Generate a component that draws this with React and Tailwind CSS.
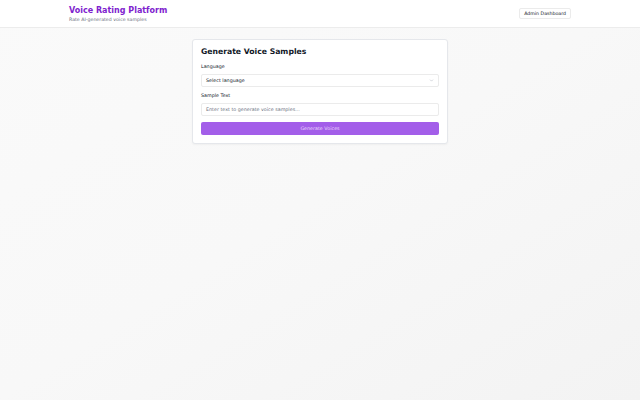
import { ChevronDown } from 'lucide-react';

export default function App() {
  return (
    <div
      className="min-h-[400px] w-full bg-gradient-to-br from-[#fafafa] via-[#f8f8f8] to-[#f3f3f3]"
      style={{ fontFamily: '"DejaVu Sans", sans-serif' }}
    >
      {/* header */}
      <header className="h-[28px] bg-white border-b border-[#ececec]">
        <div className="mx-[69px] h-full flex items-center justify-between">
          <div className="flex flex-col">
            <h1 className="text-[8px] leading-[11px] font-bold text-[#7e22ce]">Voice Rating Platform</h1>
            <p className="text-[4.7px] leading-[7px] text-[#6b7280]">Rate AI-generated voice samples</p>
          </div>
          <button className="h-[11px] px-[4px] rounded-[2px] border border-[#ebebeb] bg-white text-[4.7px] text-[#111827]">
            Admin Dashboard
          </button>
        </div>
      </header>

      {/* form card */}
      <div className="flex justify-center pt-[11px]">
        <div className="w-[256px] bg-white border border-[#e5e7eb] rounded-[3px] shadow-[0_1px_2px_rgba(0,0,0,0.04)] px-[8px] pt-[6px] pb-[8px]">
          <h2 className="text-[7.7px] leading-[12px] font-bold text-[#111827]">Generate Voice Samples</h2>

          <div className="mt-[5px]">
            <label className="block text-[4.8px] leading-[8px] text-[#111827]">Language</label>
            <div className="mt-[3px] h-[13px] flex items-center justify-between px-[4px] border border-[#ebebeb] rounded-[2px] bg-white">
              <span className="text-[4.8px] text-[#111827]">Select language</span>
              <ChevronDown className="w-[5px] h-[5px] text-[#9ca3af]" strokeWidth={2} />
            </div>
          </div>

          <div className="mt-[5px]">
            <label className="block text-[4.8px] leading-[8px] text-[#111827]">Sample Text</label>
            <div className="mt-[3px] h-[13px] flex items-center px-[4px] border border-[#ebebeb] rounded-[2px] bg-white">
              <span className="text-[4.8px] text-[#6b7280]">Enter text to generate voice samples...</span>
            </div>
          </div>

          <button className="block mt-[6px] w-full h-[13px] rounded-[2px] bg-[#a35ee9] text-[4.8px] text-[#ead9fb]">
            Generate Voices
          </button>
        </div>
      </div>
    </div>
  );
}
